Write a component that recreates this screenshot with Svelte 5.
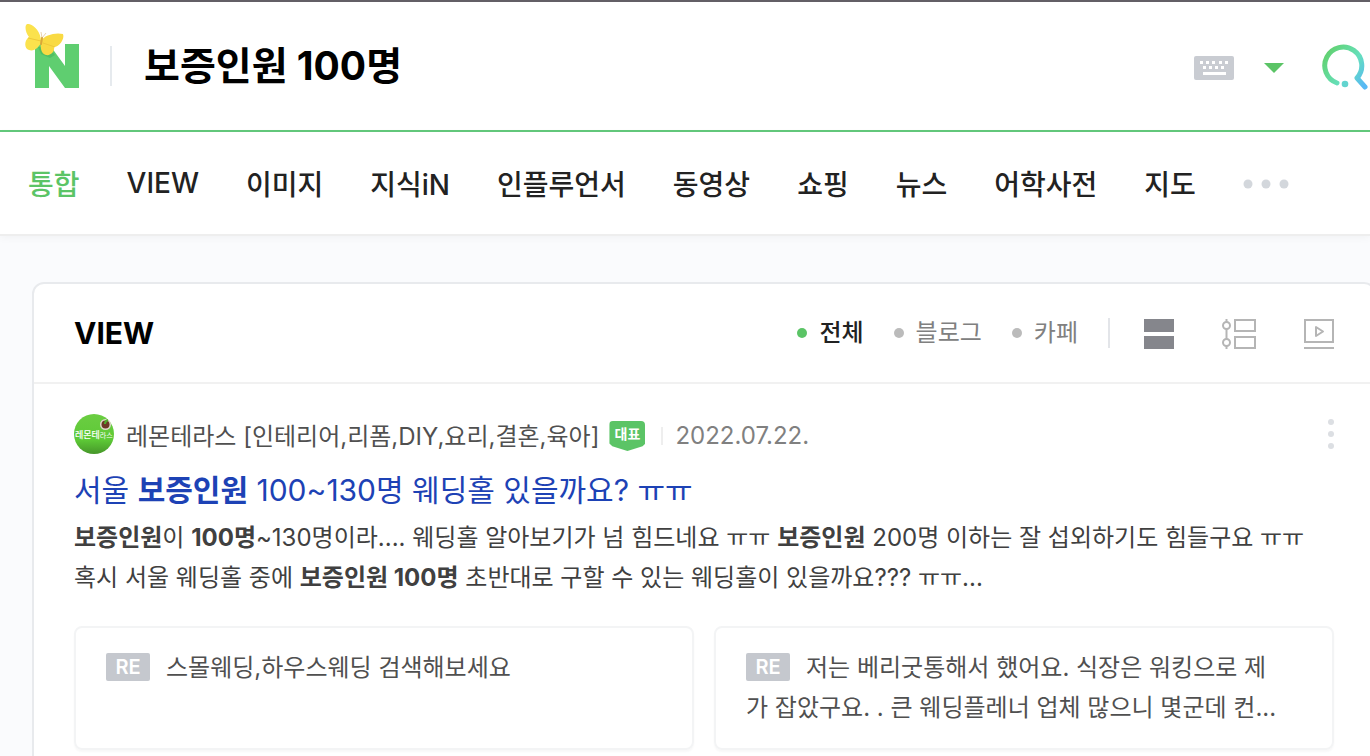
<script lang="ts">
    let query=$state('보증인원 100명');
    let filter=$state('전체');

    const tabs=['통합','VIEW','이미지','지식iN','인플루언서','동영상','쇼핑','뉴스','어학사전','지도'];
    const filters=['전체','블로그','카페'];
    const replies=[
        ['스몰웨딩,하우스웨딩 검색해보세요'],
        ['저는 베리굿통해서 했어요. 식장은 워킹으로 제','가 잡았구요. . 큰 웨딩플레너 업체 많으니 몇군데 컨...']
    ];
</script>

<div class="page">
    <header>
        <a class="logo" href="#home" aria-label="NAVER">
            <svg width="60" height="68" viewBox="0 0 60 68">
                <path fill="#5fce70" d="M11 20h14l16 22V20h14v44H41L25 42v22H11z"/>
                <path fill="#3eae57" opacity=".45" d="M14 23l11 0 6 8-5 3-9-4z"/>
                <path fill="#fbe24d" d="M17 17C17 8 9-1 3 0 0 2 2 10 5 13c-5 3-5 12 0 13 5 2 10-3 12-7z"/>
                <path fill="#f9da43" d="M17 17c3-6 15-9 22-7 2 5-4 13-9 13 1 4-3 9-8 8-5-1-6-8-5-14z"/>
                <path fill="none" stroke="#efc93a" d="M4 14l13 3M19 19l12 4"/>
                <path fill="none" stroke="#d9a838" stroke-width="2" stroke-linecap="round" d="M18 14l-1 6"/>
                <path fill="none" stroke="#d3a456" stroke-width=".5" d="M18 14l-1-6M18 14l4-5"/>
            </svg>
        </a>
        <form class="search" onsubmit={(e)=>e.preventDefault()}>
            <input type="text" aria-label="검색어" bind:value={query} />
            <button class="keyboard" type="button" aria-label="한글 입력기">
                <svg width="40" height="24" viewBox="0 0 40 24">
                    <rect width="40" height="24" rx="2" fill="#c9ccd2"/>
                    <path fill="#fff" d="M6 5h3v3H6zM12 5h3v3h-3zM18 5h3v3h-3zM25 5h3v3h-3zM31 5h3v3h-3zM9 10h3v3H9zM15 10h3v3h-3zM21 10h3v3h-3zM27 10h3v3h-3zM9 16h23v3H9z"/>
                </svg>
            </button>
            <button class="suggest" type="button" aria-label="자동완성">
                <svg width="20" height="10" viewBox="0 0 20 10"><path fill="#5bc466" d="M0 0h20L10 10z"/></svg>
            </button>
            <button class="submit" type="submit" aria-label="검색">
                <svg width="48" height="48" viewBox="0 0 48 48">
                    <defs>
                        <linearGradient id="lens" gradientUnits="userSpaceOnUse" x1="4" y1="10" x2="46" y2="40">
                            <stop offset="0" stop-color="#62cf6b"/>
                            <stop offset=".25" stop-color="#63d88e"/>
                            <stop offset=".6" stop-color="#66dfbd"/>
                            <stop offset=".82" stop-color="#5dcadb"/>
                            <stop offset="1" stop-color="#58b9f4"/>
                        </linearGradient>
                    </defs>
                    <path fill="none" stroke="url(#lens)" stroke-width="5" stroke-linecap="round" stroke-linejoin="round" d="M17 41A18.500 18.500 0 1 1 37 36L45 45"/>
                    <circle cx="25" cy="42" r="3.300" fill="#62d4cf"/>
                </svg>
            </button>
        </form>
    </header>

    <nav>
        {#each tabs as tab, i}
            <a href="#{tab}" class:active={i===0}>{tab}</a>
        {/each}
        <button type="button" aria-label="더보기">
            <svg width="46" height="10" viewBox="0 0 46 10" fill="#d3d7dc">
                <circle cx="5" cy="5" r="4.500"/><circle cx="23" cy="5" r="4.500"/><circle cx="41" cy="5" r="4.500"/>
            </svg>
        </button>
    </nav>

    <main>
        <section>
            <div class="section-head">
                <h2>VIEW</h2>
                <div class="filters">
                    {#each filters as name}
                        <button type="button" class:on={filter===name} onclick={()=>filter=name}>{name}</button>
                    {/each}
                </div>
                <div class="layouts">
                    <button type="button" aria-label="목록형">
                        <svg width="30" height="30" viewBox="0 0 30 30" fill="#85868c"><path d="M0 0h30v13H0zM0 17h30v13H0z"/></svg>
                    </button>
                    <button type="button" aria-label="타임라인형">
                        <svg width="34" height="30" viewBox="0 0 34 30" fill="none" stroke="#b5b5b5" stroke-width="2">
                            <path d="M13 1h20v11H13zM13 18h20v11H13zM4.500 0v3M4.500 10v10M4.500 27v3"/>
                            <circle cx="4.500" cy="6.500" r="3.500"/><circle cx="4.500" cy="23.500" r="3.500"/>
                        </svg>
                    </button>
                    <button type="button" aria-label="동영상형">
                        <svg width="30" height="30" viewBox="0 0 30 30" fill="none" stroke="#b5b5b5" stroke-width="2">
                            <path d="M1 1h28v22H1zM0 29h30"/><path stroke-linejoin="round" d="M12 8v9l7-4.500z"/>
                        </svg>
                    </button>
                </div>
            </div>

            <article>
                <div class="source">
                    <svg class="avatar" width="40" height="40" viewBox="0 0 40 40" aria-hidden="true">
                        <defs>
                            <linearGradient id="lemon" x2="0" y2="1">
                                <stop offset="0" stop-color="#6bcd42"/><stop offset=".65" stop-color="#5dc936"/><stop offset="1" stop-color="#46962a"/>
                            </linearGradient>
                        </defs>
                        <circle cx="20" cy="20" r="20" fill="url(#lemon)"/>
                        <circle cx="31.500" cy="10.500" r="5.500" fill="#e2d9ce"/>
                        <circle cx="31.500" cy="10.500" r="4" fill="#6d3928"/>
                        <path fill="none" stroke="#50ac2c" stroke-width="2" d="M31 10q0-3 3-4"/>
                        <text x="1" y="24" fill="#fff" font-size="9" font-weight="500">레몬테<tspan font-size="7" font-weight="400">라스</tspan></text>
                    </svg>
                    <a href="#cafe">레몬테라스 [인테리어,리폼,DIY,요리,결혼,육아]</a>
                    <span class="badge">대표</span>
                    <time datetime="2022-07-22">2022.07.22.</time>
                    <button type="button" aria-label="문서 메뉴">
                        <svg width="6" height="30" viewBox="0 0 6 30" fill="#dcdfe3">
                            <circle cx="3" cy="3" r="3"/><circle cx="3" cy="15" r="3"/><circle cx="3" cy="27" r="3"/>
                        </svg>
                    </button>
                </div>
                <h3><a href="#post">서울 <b>보증인원</b> 100~130명 웨딩홀 있을까요? ㅠㅠ</a></h3>
                <p>
                    <b>보증인원</b>이 <b>100명</b>~130명이라.... 웨딩홀 알아보기가 넘 힘드네요 ㅠㅠ <b>보증인원</b> 200명 이하는 잘 섭외하기도 힘들구요 ㅠㅠ<br>
                    혹시 서울 웨딩홀 중에 <b>보증인원 100명</b> 초반대로 구할 수 있는 웨딩홀이 있을까요??? ㅠㅠ...
                </p>
                <div class="replies">
                    {#each replies as lines}
                        <a href="#reply">
                            <span class="re">RE</span>{#each lines as line, i}{#if i}<br>{/if}{line}{/each}
                        </a>
                    {/each}
                </div>
            </article>
        </section>
    </main>
</div>

<style>
    :global(body){
        background:#fafbfd;
    }

    .page{
        display:flex;
        flex-direction:column;
        height:100vh;
        overflow:hidden;
        box-sizing:border-box;
        border-top:2px solid #635f66;
        font-family:Inter, "Noto Sans CJK KR", sans-serif;
        color:#222;
    }

    a{
        color:inherit;
        text-decoration:none;
    }

    button{
        display:flex;
        padding:0;
        border:none;
        background:none;
        font:inherit;
        color:inherit;
        cursor:pointer;
    }

    svg{
        display:block;
        flex-shrink:0;
    }

    header{
        display:flex;
        flex-shrink:0;
        align-items:center;
        height:128px;
        padding-left:24px;
        background:#fff;
        border-bottom:2px solid #63c97c;
    }

    .logo{
        padding-bottom:16px;
    }

    .search{
        display:flex;
        flex:1;
        align-items:center;
        margin-left:26px;
    }

    .search input{
        flex:1;
        min-width:0;
        height:40px;
        padding:0 0 0 32px;
        border:none;
        border-left:2px solid #e6eaee;
        outline:none;
        font:700 39px/40px Inter, "Noto Sans CJK KR", sans-serif;
        color:#000;
    }

    .keyboard,
    .suggest{
        padding-top:4px;
    }

    .suggest{
        margin:0 36px 0 30px;
    }

    .submit{
        margin-right:2px;
    }

    nav{
        display:flex;
        flex-shrink:0;
        align-items:center;
        gap:47px;
        height:102px;
        padding-left:28px;
        background:#fff;
        border-bottom:2px solid #eee;
        box-shadow:0 2px 8px rgba(0,0,0,.04);
        font-size:28px;
        font-weight:500;
        white-space:nowrap;
    }

    nav button{
        padding-top:2px;
    }

    nav .active{
        color:#5bc466;
    }

    /* the result panel runs a little past the right edge */
    section{
        margin:46px -6px 0 32px;
        padding-bottom:40px;
        background:#fff;
        border:2px solid #e8eaed;
        border-radius:12px;
    }

    .section-head{
        display:flex;
        align-items:center;
        height:98px;
        padding:0 40px;
        border-bottom:2px solid #f1f1f1;
    }

    h2{
        flex:1;
        margin:0;
        font-size:30px;
        font-weight:700;
        color:#000;
    }

    .filters{
        display:flex;
        gap:30px;
        padding-right:30px;
        font-size:24px;
        line-height:30px;
        color:#808080;
        border-right:2px solid #e3e5e9;
    }

    .filters button{
        align-items:center;
        gap:12px;
    }

    .filters button::before{
        content:'';
        width:10px;
        height:10px;
        border-radius:50%;
        background:#bbb;
    }

    .filters .on{
        color:#222;
        font-weight:500;
    }

    .filters .on::before{
        background:#5bc466;
    }

    .layouts{
        display:flex;
        gap:48px;
        margin-left:34px;
        padding-top:2px;
    }

    article{
        padding:30px 40px 0;
    }

    .source{
        display:flex;
        align-items:center;
        height:40px;
        font-size:24px;
        color:#505050;
        white-space:nowrap;
    }

    .avatar{
        margin-right:12px;
    }

    .badge{
        width:36px;
        height:30px;
        margin:4px 16px 0 10px;
        border-radius:4px;
        background:#5bc466;
        clip-path:polygon(0 0,100% 0,100% 75%,92% 84%,50% 100%,8% 84%,0 75%);
        font-size:14px;
        font-weight:700;
        line-height:26px;
        text-align:center;
        color:#fff;
    }

    time{
        margin-top:4px;
        padding-left:12px;
        border-left:2px solid #eee;
        line-height:18px;
        color:#808080;
    }

    .source button{
        margin-left:auto;
    }

    h3{
        margin:16px 0 8px;
        font-size:30px;
        font-weight:400;
        line-height:40px;
        color:#1d42b5;
    }

    p{
        margin:0 0 28px;
        font-size:24px;
        line-height:40px;
        color:#404040;
        white-space:nowrap;
    }

    .replies{
        display:flex;
        gap:20px;
    }

    .replies a{
        flex:1;
        min-width:0;
        min-height:80px;
        padding:20px 30px;
        border:2px solid #f3f4f5;
        border-radius:8px;
        box-shadow:0 2px 2px rgba(0,0,0,.03);
        font-size:24px;
        line-height:40px;
        color:#505050;
        white-space:nowrap;
    }

    .re{
        display:inline-block;
        width:44px;
        height:28px;
        margin:0 16px 4px 0;
        border-radius:2px;
        background:#c5c8ce;
        font-size:20px;
        font-weight:600;
        line-height:28px;
        text-align:center;
        vertical-align:middle;
        color:#fff;
    }
</style>
